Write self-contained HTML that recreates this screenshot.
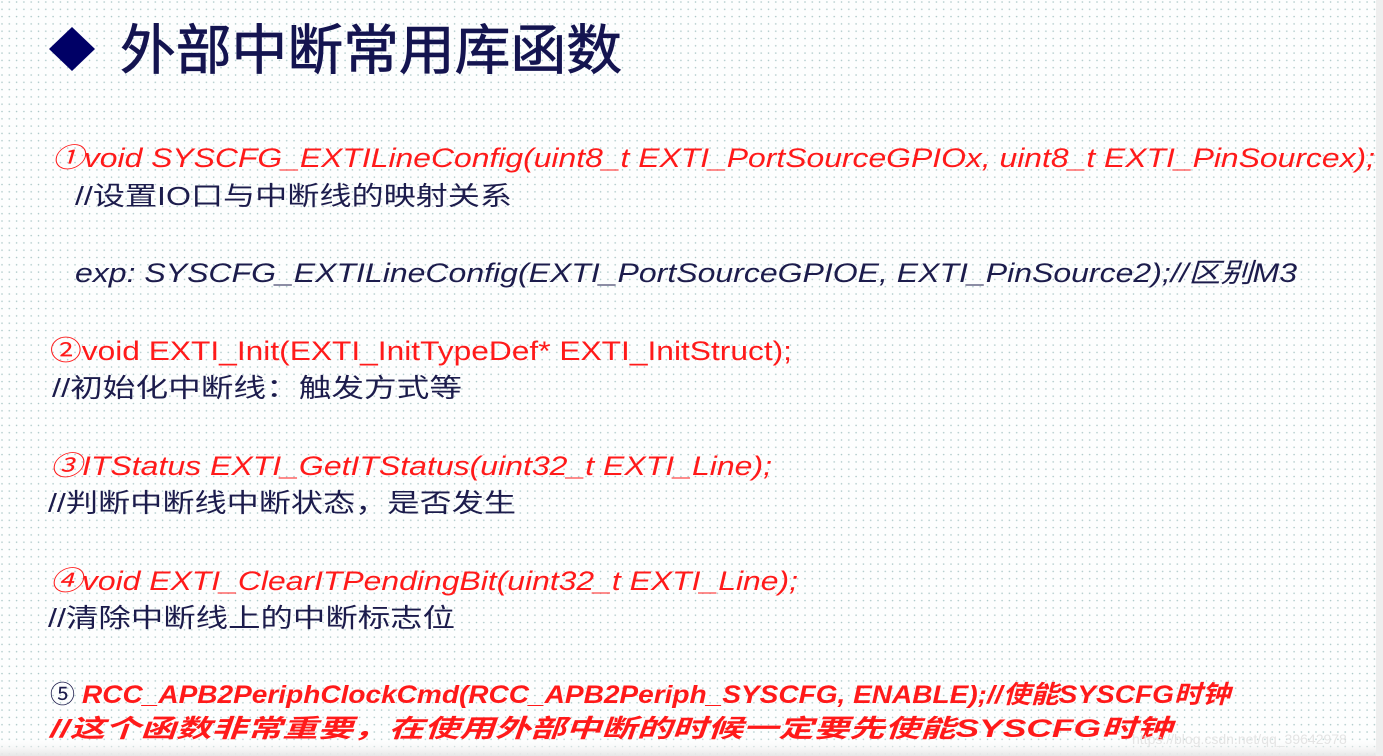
<!DOCTYPE html>
<html><head><meta charset="utf-8"><style>
html,body{margin:0;padding:0;width:1383px;height:756px;overflow:hidden;background:#fff}
svg{display:block}
text{font-family:"Liberation Sans","Noto Sans CJK SC",sans-serif}
</style></head><body>
<svg width="1383" height="756" xmlns="http://www.w3.org/2000/svg">
<defs>
<pattern id="d" width="7.3" height="7.3" patternUnits="userSpaceOnUse">
<circle cx="2" cy="2" r="0.8" fill="#a9c6c6"/>
</pattern>
<linearGradient id="g" x1="0" y1="0" x2="0" y2="1"><stop offset="0" stop-color="#fff" stop-opacity="0"/><stop offset="1" stop-color="#e6e6e6"/></linearGradient>
</defs>
<rect width="1383" height="756" fill="#fdfefe"/>
<rect width="1383" height="756" fill="url(#d)"/>
<rect x="0" y="738" width="1383" height="18" fill="url(#g)"/>
<rect x="1376" y="0" width="7" height="756" fill="#eeeeee"/>
<polygon points="72,27 95,49 72,71 49,49" fill="#000066"/>
<text x="120" y="69" font-size="54" fill="#141450" stroke="#141450" stroke-width="0.8" textLength="502" lengthAdjust="spacingAndGlyphs">外部中断常用库函数</text>

<text x="52" y="167" font-size="27" fill="#ff1a1a" font-style="italic" textLength="1323" lengthAdjust="spacingAndGlyphs">①void SYSCFG_EXTILineConfig(uint8_t EXTI_PortSourceGPIOx, uint8_t EXTI_PinSourcex);</text>
<text x="75" y="205" font-size="26" fill="#1c1c4c" textLength="437" lengthAdjust="spacingAndGlyphs">//设置IO口与中断线的映射关系</text>
<text x="75" y="282" font-size="27" fill="#1c1c4c" font-style="italic" textLength="1222" lengthAdjust="spacingAndGlyphs">exp: SYSCFG_EXTILineConfig(EXTI_PortSourceGPIOE, EXTI_PinSource2);//区别M3</text>

<text x="50" y="360" font-size="27" fill="#ff1a1a" textLength="742" lengthAdjust="spacingAndGlyphs">②void EXTI_Init(EXTI_InitTypeDef* EXTI_InitStruct);</text>
<text x="52" y="397" font-size="26" fill="#1c1c4c" textLength="410" lengthAdjust="spacingAndGlyphs">//初始化中断线：触发方式等</text>

<text x="50" y="475" font-size="27" fill="#ff1a1a" font-style="italic" textLength="722" lengthAdjust="spacingAndGlyphs">③ITStatus EXTI_GetITStatus(uint32_t EXTI_Line);</text>
<text x="48" y="512" font-size="26" fill="#1c1c4c" textLength="468" lengthAdjust="spacingAndGlyphs">//判断中断线中断状态，是否发生</text>

<text x="50" y="590" font-size="27" fill="#ff1a1a" font-style="italic" textLength="748" lengthAdjust="spacingAndGlyphs">④void EXTI_ClearITPendingBit(uint32_t EXTI_Line);</text>
<text x="48" y="627" font-size="26" fill="#1c1c4c" textLength="407" lengthAdjust="spacingAndGlyphs">//清除中断线上的中断标志位</text>

<text x="50" y="703" font-size="25" fill="#1c1c4c">⑤</text>
<text x="82" y="703" font-size="25" fill="#ff1a1a" font-style="italic" font-weight="bold" textLength="1148" lengthAdjust="spacingAndGlyphs">RCC_APB2PeriphClockCmd(RCC_APB2Periph_SYSCFG, ENABLE);//使能SYSCFG时钟</text>
<text x="50" y="737" font-size="25" fill="#ff1a1a" font-style="italic" font-weight="bold" textLength="1122" lengthAdjust="spacingAndGlyphs">//这个函数非常重要，在使用外部中断的时候一定要先使能SYSCFG时钟</text>
<text x="1132" y="744" font-size="14" fill="#e4e4e4">https://blog.csdn.net/qq_39642978</text>
</svg>
</body></html>
